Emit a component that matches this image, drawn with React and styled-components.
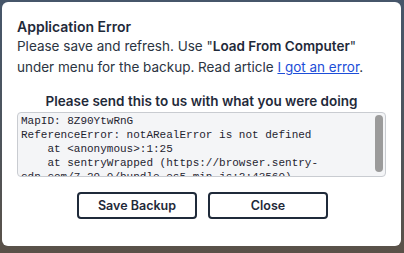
import styled, { createGlobalStyle } from 'styled-components';

const GlobalStyle = createGlobalStyle`
  html, body {
    margin: 0;
    padding: 0;
    width: 404px;
    height: 253px;
    overflow: hidden;
    background: linear-gradient(180deg, #46566a 0%, #4e555c 55%, #5a5148 100%);
  }
`

const Backdrop = styled.div`
  width: 404px;
  height: 253px;
  padding: 2px 3px 7px 2px;
  box-sizing: border-box;
`

const Modal = styled.div`
  background: #ffffff;
  border-radius: 6px;
  height: 100%;
  box-sizing: border-box;
  padding: 15px 15px 0 15px;
  font-family: Inter, "Noto Sans", sans-serif;
  color: #1f2a3a;
  display: flex;
  flex-direction: column;
`

const Title = styled.div`
  font-weight: 600;
  font-size: 14px;
  line-height: 19px;
`

const Message = styled.p`
  margin: 0;
  font-size: 13.5px;
  line-height: 21px;
  color: #2b3442;
  & b {
    font-weight: 600;
    color: #1f2a3a;
  }
  & a {
    color: #1d4ed8;
    text-decoration: underline;
  }
`

const SendLabel = styled.div`
  margin-top: 15px;
  text-align: center;
  font-weight: 600;
  font-size: 13.5px;
  line-height: 17px;
`

const LogBox = styled.div`
  position: relative;
  margin-top: 2px;
  height: 65px;
  box-sizing: border-box;
  border: 1px solid #c9ccd1;
  border-radius: 4px;
  background: #f4f5f7;
  overflow: hidden;
  padding: 1px 14px 0 3px;
`

const LogText = styled.pre`
  margin: 0;
  font-family: "Liberation Mono", "DejaVu Sans Mono", monospace;
  font-size: 11px;
  line-height: 14px;
  color: #1f2430;
  white-space: pre-wrap;
  word-break: normal;
`

const ScrollThumb = styled.div`
  position: absolute;
  right: 2px;
  top: 2px;
  bottom: 4px;
  width: 8px;
  border-radius: 4px;
  background: #9b9b9b;
`

const ButtonRow = styled.div`
  display: flex;
  justify-content: center;
  gap: 11px;
  margin-top: 15px;
  padding-left: 2px;
`

const Button = styled.button`
  width: 120px;
  height: 27px;
  border: 2px solid #1f2a3a;
  border-radius: 4px;
  background: #ffffff;
  color: #1f2a3a;
  font-family: Inter, "Noto Sans", sans-serif;
  font-weight: 600;
  font-size: 12.5px;
  cursor: pointer;
`

const log = `MapID: 8Z90YtwRnG
ReferenceError: notARealError is not defined
    at <anonymous>:1:25
    at sentryWrapped (https://browser.sentry-cdn.com/7.29.0/bundle.es5.min.js:2:43560)`

function App() {
  return (
    <Backdrop>
      <GlobalStyle />
      <Modal>
        <Title>Application Error</Title>
        <Message>
          Please save and refresh. Use "<b>Load From Computer</b>" under menu for the backup. Read article{' '}
          <a href="#">I got an error</a>.
        </Message>
        <SendLabel>Please send this to us with what you were doing</SendLabel>
        <LogBox>
          <LogText>{log}</LogText>
          <ScrollThumb />
        </LogBox>
        <ButtonRow>
          <Button>Save Backup</Button>
          <Button>Close</Button>
        </ButtonRow>
      </Modal>
    </Backdrop>
  )
}

export default App
